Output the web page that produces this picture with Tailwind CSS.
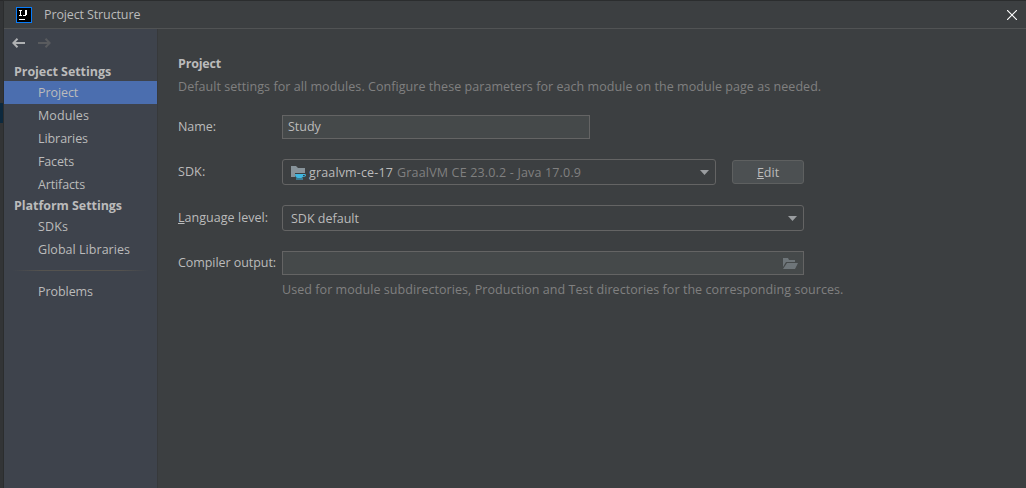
<!DOCTYPE html>
<html lang="en">
<head>
<meta charset="utf-8">
<title>Project Structure</title>
<script src="https://cdn.jsdelivr.net/npm/@tailwindcss/browser@4"></script>
</head>
<body class="flex h-[488px] w-[1026px] overflow-hidden bg-[#3c3f41] font-['Open_Sans','Noto_Sans',sans-serif] text-[12.5px] leading-[18px] text-[#bbbbbb]">
<div class="w-[3px] shrink-0 border-t border-[#28292b] bg-[#323436] pt-[102px]"><div class="h-5 bg-[#0d293e]"></div></div>
<div class="flex min-w-0 grow flex-col border-l border-t border-[#2b2d2e]">
  <header class="flex h-7 shrink-0 items-center border-b border-[#515354] pl-3">
    <svg class="size-4 shrink-0" viewBox="0 0 16 16" shape-rendering="crispEdges"><path fill="#087cfa" d="M0 0h16v16H0z"/><path fill="#000" d="M1 1h14v14H1z"/><path fill="#fff" d="M3 3h3v1H5v4h1v1H3V8h1V4H3zM9 3h2v5h-1v1H7V8h2zM3 12h6v1H3z"/></svg>
    <h1 class="ml-3 grow tracking-[-0.12px]">Project Structure</h1>
    <svg class="mr-[9px] size-[10px]" viewBox="0 0 10 10" fill="none" stroke="#fff" stroke-width="1.1"><path d="M0 0l10 10M10 0L0 10"/></svg>
  </header>
  <div class="flex min-h-0 grow">
    <nav class="flex w-[153px] shrink-0 flex-col bg-[#3e434c]">
      <div class="flex h-[34px] items-start gap-[13px] pl-2 pt-2">
        <svg class="h-3 w-[13px]" viewBox="0 0 13 12" fill="none" stroke="#afb1b3" stroke-width="2"><path d="M13 6H1.500M5.500 1.800L1.300 6L5.500 10.200"/></svg>
        <svg class="h-3 w-[13px]" viewBox="0 0 13 12" fill="none" stroke="#595b5e" stroke-width="2"><path d="M0 6H11.500M7.500 1.800L11.700 6L7.500 10.200"/></svg>
      </div>
      <h2 class="h-[18px] pl-[10px] font-bold tracking-[-0.06px]">Project Settings</h2>
      <div class="h-[23px] bg-[#4b6eaf] pl-[34px] pt-[3px] tracking-[-0.08px]">Project</div>
      <div class="h-[23px] pl-[34px] pt-[3px] tracking-[0.11px]">Modules</div>
      <div class="h-[23px] pl-[34px] pt-[3px] tracking-[-0.07px]">Libraries</div>
      <div class="h-[23px] pl-[34px] pt-[3px] tracking-[-0.14px]">Facets</div>
      <div class="h-[23px] pl-[34px] pt-[3px] tracking-[-0.13px]">Artifacts</div>
      <h2 class="h-[19px] pl-[10px] pt-px font-bold tracking-[-0.05px]">Platform Settings</h2>
      <div class="h-[23px] pl-[34px] pt-[3px] tracking-[0.11px]">SDKs</div>
      <div class="h-[23px] pl-[34px] pt-[3px] tracking-[0.04px]">Global Libraries</div>
      <div class="mx-[9px] my-[9px] flex h-px"><div class="w-7 bg-linear-to-r from-transparent to-[#55534f]"></div><div class="grow bg-[#55534f]"></div><div class="w-7 bg-linear-to-l from-transparent to-[#55534f]"></div></div>
      <div class="h-[23px] pl-[34px] pt-[3px] tracking-[-0.06px]">Problems</div>
    </nav>
    <main class="grow border-l border-[#37393b] pl-5 pt-[26px]">
      <h2 class="h-[23px] font-bold tracking-[-0.19px]">Project</h2>
      <p class="h-[37px] tracking-[0.056px] text-[#808080]">Default settings for all modules. Configure these parameters for each module on the module page as needed.</p>
      <div class="flex h-6 items-center"><label class="w-[104px] tracking-[-0.05px]">Name:</label><div class="flex h-6 w-[308px] items-center border border-[#646464] bg-[#45494a] pl-[5px]">Study</div></div>
      <div class="mt-5 flex h-[26px] items-center"><label class="w-[104px] tracking-[0.1px]">SDK:</label>
        <div class="flex h-[26px] w-[434px] items-center rounded-[3px] border border-[#646464] pl-2">
          <svg class="mr-[3px] h-4 w-[15px]" viewBox="0 0 15 16"><path fill="#87939a" d="M0 2h5l2 2h7v5H4v4H0z"/><path fill="#40b6e0" fill-rule="evenodd" d="M4 10h9.500q1.500 0 1.500 1.200T13.300 12.800h-1.300Q11.300 14 10 14H7Q4 14 4 10zM12 11v1h1.300q.6 0 .6-.5t-.6-.5zM5 14.500h7v1H5z"/></svg>
          <span class="pt-0.5 tracking-[0.15px]">graalvm-ce-17</span><span class="ml-1 grow pt-0.5 tracking-[0.17px] text-[#808080]">GraalVM CE 23.0.2 - Java 17.0.9</span>
          <svg class="mr-[6px] h-[5px] w-[9px]" viewBox="0 0 9 5"><path fill="#9a9da0" d="M0 0h9L4.500 5z"/></svg>
        </div>
        <div class="ml-4 flex h-6 w-[72px] items-center justify-center rounded-[3px] border border-[#5e6060] bg-[#4c5052]"><span class="pt-0.5"><u>E</u>dit</span></div>
      </div>
      <div class="mt-5 flex h-[26px] items-center"><label class="w-[104px] tracking-[0.04px]"><u>L</u>anguage level:</label>
        <div class="flex h-[26px] w-[522px] items-center rounded-[3px] border border-[#646464] pl-2"><span class="grow pt-0.5">SDK default</span><svg class="mr-[6px] h-[5px] w-[9px]" viewBox="0 0 9 5"><path fill="#9a9da0" d="M0 0h9L4.500 5z"/></svg></div>
      </div>
      <div class="mt-5 flex h-6 items-center"><label class="w-[104px] tracking-[-0.06px]">Compiler output:</label>
        <div class="flex h-6 w-[522px] items-center justify-end border border-[#646464] bg-[#45494a] pr-[5px]"><svg class="h-[11px] w-[15px]" viewBox="0 0 15 11"><path fill="#6e7579" d="M0 0h5l1 2h6v2H3L0 9zM4 5h11l-3 6H0z"/></svg></div>
      </div>
      <p class="mt-[6px] pl-[104px] tracking-[0.06px] text-[#808080]">Used for module subdirectories, Production and Test directories for the corresponding sources.</p>
    </main>
  </div>
</div>
</body>
</html>
